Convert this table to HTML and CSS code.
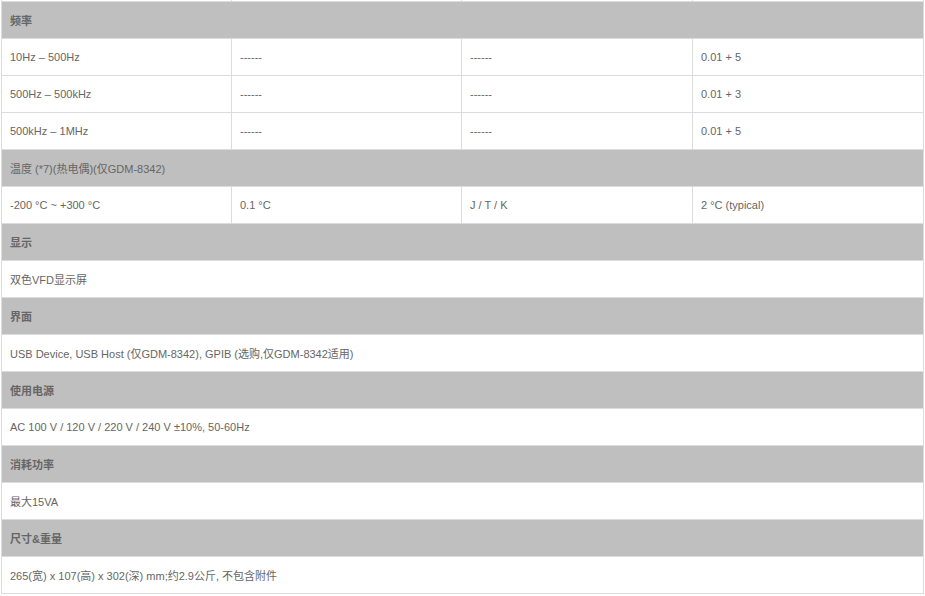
FILE: index.html
```html
<!DOCTYPE html>
<html lang="zh-CN">
<head>
<meta charset="utf-8">
<title>规格</title>
<link rel="stylesheet" href="styles.css">
</head>
<body>
<table class="spec">
  <colgroup>
    <col class="c1"><col class="c2"><col class="c3"><col class="c4">
  </colgroup>
  <tbody>
    <tr class="row"><td></td><td></td><td></td><td></td></tr>
    <tr class="head"><td colspan="4"><b>频率</b></td></tr>
    <tr class="row"><td>10Hz – 500Hz</td><td>------</td><td>------</td><td>0.01 + 5</td></tr>
    <tr class="row"><td>500Hz – 500kHz</td><td>------</td><td>------</td><td>0.01 + 3</td></tr>
    <tr class="row"><td>500kHz – 1MHz</td><td>------</td><td>------</td><td>0.01 + 5</td></tr>
    <tr class="head"><td colspan="4">温度 (*7)(热电偶)(仅GDM-8342)</td></tr>
    <tr class="row"><td>-200 °C ~ +300 °C</td><td>0.1 °C</td><td>J / T / K</td><td>2 °C (typical)</td></tr>
    <tr class="head"><td colspan="4"><b>显示</b></td></tr>
    <tr class="row"><td colspan="4">双色VFD显示屏</td></tr>
    <tr class="head"><td colspan="4"><b>界面</b></td></tr>
    <tr class="row"><td colspan="4">USB Device, USB Host (仅GDM-8342), GPIB (选购,仅GDM-8342适用)</td></tr>
    <tr class="head"><td colspan="4"><b>使用电源</b></td></tr>
    <tr class="row"><td colspan="4">AC 100 V / 120 V / 220 V / 240 V ±10%, 50-60Hz</td></tr>
    <tr class="head"><td colspan="4"><b>消耗功率</b></td></tr>
    <tr class="row"><td colspan="4">最大15VA</td></tr>
    <tr class="head"><td colspan="4"><b>尺寸&amp;重量</b></td></tr>
    <tr class="row"><td colspan="4">265(宽) x 107(高) x 302(深) mm;约2.9公斤, 不包含附件</td></tr>
  </tbody>
</table>
</body>
</html>
```

FILE: styles.css
```css
html, body {
  margin: 0;
  padding: 0;
  background: #fff;
  overflow: hidden;
}
body {
  padding-left: 1px;
}
.spec {
  border-collapse: collapse;
  table-layout: fixed;
  width: 922px;
  margin-top: -36px;
  font-family: "Liberation Sans", "Noto Sans CJK SC", sans-serif;
  font-size: 11px;
  color: #666;
}
.c1 { width: 230px; }
.c2 { width: 230px; }
.c3 { width: 231px; }
.c4 { width: 231px; }
.spec td {
  border: 1px solid #dcdcdc;
  height: 36px;
  padding: 0 8px;
  box-sizing: border-box;
  vertical-align: middle;
  white-space: nowrap;
}
.spec tr td { height: 37px; }
.head td {
  background: #bfbfbf;
}
.head b {
  font-weight: bold;
}
```
